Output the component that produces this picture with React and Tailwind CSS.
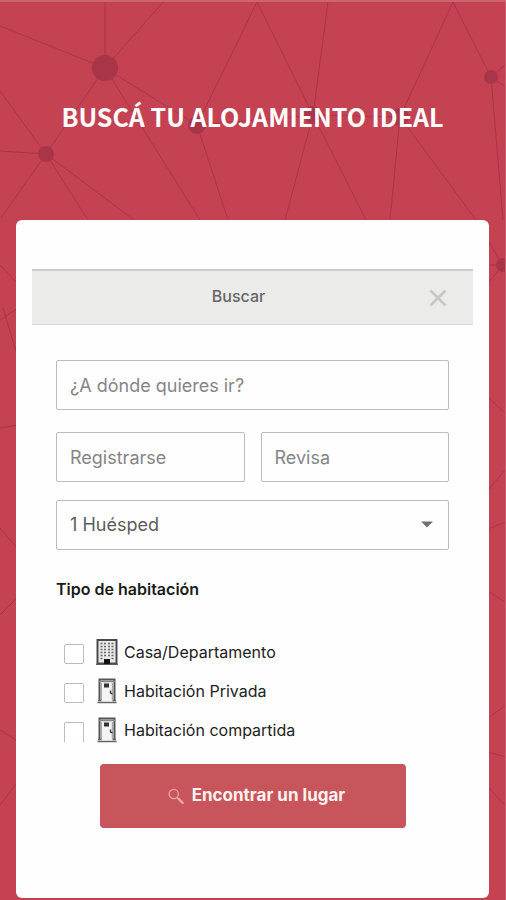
import { useState } from "react";

const roomTypes = [
  { id: "house", label: "Casa/Departamento", icon: "building" },
  { id: "private", label: "Habitación Privada", icon: "door" },
  { id: "shared", label: "Habitación compartida", icon: "door" },
];

const lines = [
  [105, 68, 105, 0], [105, 68, 165, 0], [105, 68, 0, 26], [105, 68, 46, 154],
  [105, 68, 200, 220], [105, 68, 197, 125], [46, 154, 0, 91], [46, 154, 0, 151],
  [46, 154, 1, 218], [46, 154, 88, 220], [46, 154, 134, 220], [197, 125, 257, 2],
  [197, 125, 228, 220], [257, 2, 313, 115], [328, 2, 313, 115], [197, 125, 313, 115],
  [313, 115, 285, 220], [313, 115, 366, 220], [313, 115, 400, 117], [453, 2, 400, 117],
  [400, 117, 390, 220], [400, 117, 476, 220], [453, 2, 491, 77], [491, 77, 506, 64],
  [491, 77, 506, 87], [491, 77, 503, 220], [503, 265, 488, 241], [503, 265, 488, 265],
  [503, 265, 488, 283], [0, 265, 18, 284], [0, 320, 18, 308], [3, 308, 18, 358],
  [0, 428, 18, 425], [0, 528, 18, 549], [0, 615, 18, 597], [0, 730, 18, 741],
  [0, 805, 18, 782], [488, 397, 506, 414], [488, 490, 506, 469], [488, 529, 506, 522],
  [488, 591, 506, 603], [488, 718, 506, 705], [488, 752, 506, 757], [488, 787, 506, 806],
];

const nodes = [
  [105, 68, 13], [46, 154, 8], [197, 125, 9], [313, 115, 9],
  [400, 117, 9], [491, 77, 7], [503, 265, 7],
];

function Network() {
  return (
    <svg
      className="absolute inset-0 w-full h-full"
      viewBox="0 2 505 898"
      preserveAspectRatio="xMidYMin slice"
      aria-hidden="true"
    >
      {lines.map(([x1, y1, x2, y2], i) => (
        <line key={i} x1={x1} y1={y1} x2={x2} y2={y2} stroke="#ab334a" strokeWidth="1" />
      ))}
      {nodes.map(([cx, cy, r], i) => (
        <circle key={i} cx={cx} cy={cy} r={r} fill="#a83548" />
      ))}
    </svg>
  );
}

function BuildingIcon() {
  return (
    <svg width="22" height="26" viewBox="0 0 22 26" aria-hidden="true">
      <rect x="1.5" y="1" width="19" height="23.5" fill="#e9e9e9" stroke="#4a4a4a" strokeWidth="2" />
      <path d="M0 25.3h22" stroke="#555" strokeWidth="1.2" />
      {[4, 7, 10, 13, 16].map((y) => (
        <path key={y} d={`M4.5 ${y + 0.5}h2M8 ${y + 0.5}h2M12 ${y + 0.5}h2M15.5 ${y + 0.5}h2`} stroke="#6b6b6b" strokeWidth="1.7" />
      ))}
      <path d="M4.5 19.5h2M15.5 19.5h2" stroke="#6b6b6b" strokeWidth="1.7" />
      <rect x="8" y="20" width="6" height="5" fill="#111" />
    </svg>
  );
}

function DoorIcon() {
  return (
    <svg width="22" height="26" viewBox="0 0 22 26" aria-hidden="true">
      <path d="M3.5 23V1.5h15V23" fill="#f4f4f4" stroke="#555" strokeWidth="2" />
      <path d="M3 3.5h16" stroke="#888" strokeWidth="1.5" />
      <path d="M5.5 22V5" stroke="#aaa" strokeWidth="1" />
      <path d="M16.3 22V5" stroke="#999" strokeWidth="1" />
      <rect x="8" y="5.5" width="5" height="4" fill="#333" />
      <path d="M14.5 12.5v2.5l2 .8" stroke="#333" strokeWidth="1.3" fill="none" />
      <path d="M2 22.5h3.5M16.5 22.5H20M1.5 24.5h19" stroke="#666" strokeWidth="1.6" />
    </svg>
  );
}

function SearchIcon() {
  return (
    <svg width="16" height="17" viewBox="0 0 16 17" fill="none" aria-hidden="true">
      <circle cx="5.7" cy="6" r="4.6" stroke="#eaa6a4" strokeWidth="1.2" />
      <path d="M9.2 9.5l1.5 1.5" stroke="#eaa6a4" strokeWidth="1.2" />
      <path d="M10.6 10.9l4 4" stroke="#eaa6a4" strokeWidth="2.4" strokeLinecap="round" />
    </svg>
  );
}

function App() {
  const [guests, setGuests] = useState("1");
  const [selectedTypes, setSelectedTypes] = useState([]);

  const handleTypeChange = (id) => {
    setSelectedTypes((prev) =>
      prev.includes(id) ? prev.filter((t) => t !== id) : [...prev, id]
    );
  };

  return (
    <div className="relative flex flex-col min-h-screen overflow-hidden bg-[#c54253] border-t-2 border-r border-[#cc6371] font-['Inter',sans-serif]">
      <Network />
      <h1 className="relative pt-[94px] pb-21 text-center text-[25px] leading-10 font-bold text-white whitespace-nowrap font-['Noto_Sans_CJK_SC','Liberation_Sans',sans-serif]">
        BUSCÁ TU ALOJAMIENTO IDEAL
      </h1>
      <main className="relative grow mx-4 mb-[2px] px-4 pt-[49px] bg-[#fefefe] rounded-md">
        <header className="relative flex items-center justify-center h-14 pb-1 bg-[#ebebea] border-t-2 border-b border-t-[#cccccc] border-b-[#d6d6d6]">
          <h2 className="pr-7 text-base leading-6 font-medium text-[#666]">Buscar</h2>
          <button type="button" aria-label="Cerrar" className="absolute right-[26px] top-[18px]">
            <svg width="18" height="18" viewBox="0 0 18 18" aria-hidden="true">
              <path d="M1.5 1.5l15 15M16.5 1.5l-15 15" stroke="#c6c6c6" strokeWidth="2.5" />
            </svg>
          </button>
        </header>
        <form className="px-6 pt-[35px]" onSubmit={(e) => e.preventDefault()}>
          <input
            type="text"
            aria-label="Destino"
            placeholder="¿A dónde quieres ir?"
            className="block w-full h-[50px] px-[13px] text-lg text-[#555] placeholder:text-[#858585] border border-[#bcbcbc] rounded-xs"
          />
          <div className="grid grid-cols-2 gap-4 mt-[22px]">
            <input
              type="text"
              aria-label="Registrarse"
              placeholder="Registrarse"
              className="w-full h-[50px] px-[13px] text-lg text-[#555] placeholder:text-[#858585] border border-[#bcbcbc] rounded-xs"
            />
            <input
              type="text"
              aria-label="Revisa"
              placeholder="Revisa"
              className="w-full h-[50px] px-[13px] text-lg text-[#555] placeholder:text-[#858585] border border-[#bcbcbc] rounded-xs"
            />
          </div>
          <div className="relative mt-[18px]">
            <select
              aria-label="Huéspedes"
              value={guests}
              onChange={(e) => setGuests(e.target.value)}
              className="block w-full h-[50px] px-[13px] text-lg text-[#5c5c5c] bg-transparent appearance-none border border-[#bcbcbc] rounded-xs"
            >
              <option value="1">1 Huésped</option>
            </select>
            <svg className="absolute right-4 top-[21px] pointer-events-none" width="12" height="7" viewBox="0 0 12 7" aria-hidden="true">
              <path d="M0 .5h12L6 6.5z" fill="#707070" />
            </svg>
          </div>
          <fieldset>
            <legend className="pt-[27px] text-base leading-6 font-semibold text-[#1a1a1a]">
              Tipo de habitación
            </legend>
            <div className="flex flex-col gap-3 mt-[37px] pl-2">
              {roomTypes.map((type) => (
                <div key={type.id} className="group flex items-center h-[27px]">
                  <input
                    type="checkbox"
                    id={type.id}
                    checked={selectedTypes.includes(type.id)}
                    onChange={() => handleTypeChange(type.id)}
                    className="appearance-none size-5 mt-1 mr-3 bg-white border border-[#bcbcbc] rounded-xs group-last:border-b-0 group-last:rounded-b-none checked:bg-[#c9555c]"
                  />
                  <label htmlFor={type.id} className="flex items-center gap-1.5 text-base leading-6 text-[#222]">
                    {type.icon === "building" ? <BuildingIcon /> : <DoorIcon />}
                    {type.label}
                  </label>
                </div>
              ))}
            </div>
          </fieldset>
          <button
            type="submit"
            className="flex items-center justify-center gap-2 mx-auto mt-[21px] w-[306px] max-w-full h-16 pl-2 rounded-sm bg-[#c9555c] text-[17px] font-bold text-[#fff2ee]"
          >
            <SearchIcon />
            Encontrar un lugar
          </button>
        </form>
      </main>
    </div>
  );
}

export default App;
